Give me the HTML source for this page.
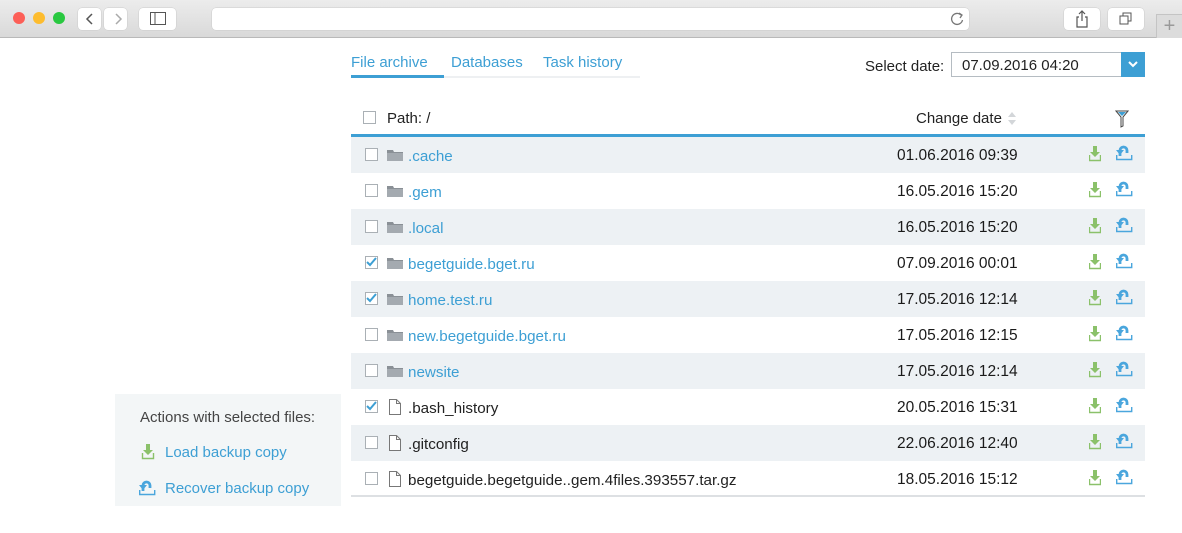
<!DOCTYPE html>
<html><head><meta charset="utf-8">
<style>
*{margin:0;padding:0;box-sizing:border-box}
body{width:1182px;height:533px;overflow:hidden;background:#fff;font-family:"Liberation Sans","DejaVu Sans",sans-serif;position:relative;color:#222}
.a{position:absolute}
.bar{left:0;top:0;width:1182px;height:38px;background:linear-gradient(#ececec,#d9d9d9);border-bottom:1px solid #b9b9b9}
.dot{width:12px;height:12px;border-radius:50%;top:12px}
.btn{background:#fff;border-radius:4px;height:22px;top:8px;box-shadow:0 0 0 .5px #ccc}
.tab{font-size:15px;color:#3d9fd4;top:54px}
.row{left:351px;width:794px;height:36px}
.sh{background:#edf1f4}
.cb{width:13px;height:13px;border:1px solid #aab0b5;background:#fff;left:14px;top:11px}
.nm{left:57px;top:11px;font-size:15.2px}
.lk{color:#3d9fd4}
.dt{left:546px;top:10px;font-size:15.5px;color:#1a1a1a}
.ic1{left:738px;top:9px}
.ic2{left:765px;top:7px}
.fold{left:36px;top:12px;width:16px;height:12px}
</style></head><body>
<div class="a bar"></div>
<div class="a dot" style="left:13px;background:#fc5f57"></div>
<div class="a dot" style="left:33px;background:#fdbc2e"></div>
<div class="a dot" style="left:53px;background:#29c840"></div>
<div class="a btn" style="left:78px;width:23px"></div>
<div class="a btn" style="left:104px;width:23px"></div>
<svg class="a" style="left:78px;top:8px" width="50" height="22"><path d="M14 6l-5 5 5 5" stroke="#555" stroke-width="1.5" fill="none"/><path d="M38 6l5 5-5 5" stroke="#aaa" stroke-width="1.5" fill="none"/></svg>
<div class="a btn" style="left:139px;width:37px"></div>
<svg class="a" style="left:150px;top:12px" width="16" height="13"><rect x=".5" y=".5" width="15" height="12" fill="none" stroke="#555"/><line x1="5" y1="0" x2="5" y2="13" stroke="#555"/></svg>
<div class="a btn" style="left:212px;width:757px"></div>
<svg class="a" style="left:949px;top:11px" width="16" height="16"><path d="M12 4A5.5 5.5 0 1 0 13.5 9" stroke="#777" stroke-width="1.3" fill="none"/><path d="M10 2l3 2-2 3" stroke="#777" stroke-width="1.3" fill="none"/></svg>
<div class="a btn" style="left:1064px;width:36px"></div>
<svg class="a" style="left:1075px;top:10px" width="14" height="18"><path d="M4 7H2v10h10V7h-2M7 1v10M4 4l3-3 3 3" stroke="#555" stroke-width="1.2" fill="none"/></svg>
<div class="a btn" style="left:1108px;width:36px"></div>
<svg class="a" style="left:1119px;top:12px" width="14" height="14"><rect x="1" y="4" width="8" height="8" fill="none" stroke="#555"/><path d="M4 4V1h8v8H9" stroke="#555" fill="none"/></svg>
<div class="a" style="left:1156px;top:14px;width:26px;height:24px;border-left:1px solid #c4c4c4;border-top:1px solid #c4c4c4;background:#dcdcdc;color:#999;font-size:20px;line-height:22px;text-align:center">+</div>

<div class="a tab" style="left:351px">File archive</div>
<div class="a tab" style="left:451px">Databases</div>
<div class="a tab" style="left:543px">Task history</div>
<div class="a" style="left:351px;top:76px;width:289px;height:2px;background:#eef0f2"></div>
<div class="a" style="left:351px;top:75px;width:93px;height:3px;background:#3d9fd4"></div>
<div class="a" style="left:865px;top:58px;font-size:15px">Select date:</div>
<div class="a" style="left:951px;top:52px;width:194px;height:25px;border:1px solid #b5bcc2;background:#fff;font-size:15px;padding:4px 0 0 10px">07.09.2016 04:20</div>
<div class="a" style="left:1121px;top:52px;width:24px;height:25px;background:#3d9fd4"></div>
<svg class="a" style="left:1127px;top:60px" width="12" height="10"><path d="M2 2l4 4 4-4" stroke="#fff" stroke-width="2" fill="none"/></svg>

<div class="a cb" style="left:363px;top:111px"></div>
<div class="a" style="left:387px;top:110px;font-size:15px">Path: /</div>
<div class="a" style="left:916px;top:110px;font-size:15px">Change date</div>
<svg class="a" style="left:1007px;top:111px" width="10" height="16"><path d="M1 6l4-5 4 5z M1 9l4 5 4-5z" fill="#d3d6d9"/></svg>
<svg class="a" style="left:1115px;top:110px" width="14" height="18"><path d="M1 1h12L8 7v9l-2 1V7z" fill="none" stroke="#444" stroke-width="1"/><path d="M3 2h8L7 6z" fill="#3d9fd4"/></svg>
<div class="a" style="left:351px;top:134px;width:794px;height:3px;background:#3d9fd4"></div>

<svg width="0" height="0" style="position:absolute"><defs>
<g id="dl"><path d="M4 0h4v6h3L6 11 1 6h3z" fill="#8bc16a"/><path d="M.5 9v5.5h11V9" fill="none" stroke="#8bc16a" stroke-width="1.4"/></g>
<g id="rc"><path d="M4 12V6.5a3.5 3.5 0 0 1 7 0V9" fill="none" stroke="#4aa6dd" stroke-width="2.8"/><path d="M0 6l4 5 4-5z" fill="#4aa6dd"/><path d="M.7 11v4.5h15V11" fill="none" stroke="#4aa6dd" stroke-width="1.4"/></g>
<g id="fd"><path d="M0 1h6l1 2h9v10H0z" fill="#8a9096"/><rect x="0" y="4" width="16" height="9" fill="#a4aab0"/></g>
<g id="fl"><path d="M.5.5h7l4 4v11H.5z" fill="#fff" stroke="#777"/><path d="M7.5.5v4h4" fill="none" stroke="#777"/></g>
<path id="ck" d="M2 6l3 3 6-7" stroke="#3d9fd4" stroke-width="2" fill="none"/>
</defs></svg>

<div class="a row sh" style="top:137px"><div class="a cb"></div><svg class="a fold" width="16" height="14"><use href="#fd"/></svg><div class="a nm lk">.cache</div><div class="a dt">01.06.2016 09:39</div><svg class="a ic1" width="12" height="16"><use href="#dl"/></svg><svg class="a ic2" width="17" height="17"><use href="#rc"/></svg></div>
<div class="a row" style="top:173px"><div class="a cb"></div><svg class="a fold" width="16" height="14"><use href="#fd"/></svg><div class="a nm lk">.gem</div><div class="a dt">16.05.2016 15:20</div><svg class="a ic1" width="12" height="16"><use href="#dl"/></svg><svg class="a ic2" width="17" height="17"><use href="#rc"/></svg></div>
<div class="a row sh" style="top:209px"><div class="a cb"></div><svg class="a fold" width="16" height="14"><use href="#fd"/></svg><div class="a nm lk">.local</div><div class="a dt">16.05.2016 15:20</div><svg class="a ic1" width="12" height="16"><use href="#dl"/></svg><svg class="a ic2" width="17" height="17"><use href="#rc"/></svg></div>
<div class="a row" style="top:245px"><div class="a cb"><svg width="13" height="13" style="position:absolute;left:-1px;top:-1px"><use href="#ck"/></svg></div><svg class="a fold" width="16" height="14"><use href="#fd"/></svg><div class="a nm lk">begetguide.bget.ru</div><div class="a dt">07.09.2016 00:01</div><svg class="a ic1" width="12" height="16"><use href="#dl"/></svg><svg class="a ic2" width="17" height="17"><use href="#rc"/></svg></div>
<div class="a row sh" style="top:281px"><div class="a cb"><svg width="13" height="13" style="position:absolute;left:-1px;top:-1px"><use href="#ck"/></svg></div><svg class="a fold" width="16" height="14"><use href="#fd"/></svg><div class="a nm lk">home.test.ru</div><div class="a dt">17.05.2016 12:14</div><svg class="a ic1" width="12" height="16"><use href="#dl"/></svg><svg class="a ic2" width="17" height="17"><use href="#rc"/></svg></div>
<div class="a row" style="top:317px"><div class="a cb"></div><svg class="a fold" width="16" height="14"><use href="#fd"/></svg><div class="a nm lk">new.begetguide.bget.ru</div><div class="a dt">17.05.2016 12:15</div><svg class="a ic1" width="12" height="16"><use href="#dl"/></svg><svg class="a ic2" width="17" height="17"><use href="#rc"/></svg></div>
<div class="a row sh" style="top:353px"><div class="a cb"></div><svg class="a fold" width="16" height="14"><use href="#fd"/></svg><div class="a nm lk">newsite</div><div class="a dt">17.05.2016 12:14</div><svg class="a ic1" width="12" height="16"><use href="#dl"/></svg><svg class="a ic2" width="17" height="17"><use href="#rc"/></svg></div>
<div class="a row" style="top:389px"><div class="a cb"><svg width="13" height="13" style="position:absolute;left:-1px;top:-1px"><use href="#ck"/></svg></div><svg class="a" style="left:38px;top:10px" width="12" height="16"><use href="#fl"/></svg><div class="a nm">.bash_history</div><div class="a dt">20.05.2016 15:31</div><svg class="a ic1" width="12" height="16"><use href="#dl"/></svg><svg class="a ic2" width="17" height="17"><use href="#rc"/></svg></div>
<div class="a row sh" style="top:425px"><div class="a cb"></div><svg class="a" style="left:38px;top:10px" width="12" height="16"><use href="#fl"/></svg><div class="a nm">.gitconfig</div><div class="a dt">22.06.2016 12:40</div><svg class="a ic1" width="12" height="16"><use href="#dl"/></svg><svg class="a ic2" width="17" height="17"><use href="#rc"/></svg></div>
<div class="a row" style="top:461px"><div class="a cb"></div><svg class="a" style="left:38px;top:10px" width="12" height="16"><use href="#fl"/></svg><div class="a nm">begetguide.begetguide..gem.4files.393557.tar.gz</div><div class="a dt">18.05.2016 15:12</div><svg class="a ic1" width="12" height="16"><use href="#dl"/></svg><svg class="a ic2" width="17" height="17"><use href="#rc"/></svg></div>
<div class="a" style="left:351px;top:495px;width:794px;height:2px;background:#dde0e3"></div>

<div class="a" style="left:115px;top:394px;width:226px;height:112px;background:#f3f6f7"></div>
<div class="a" style="left:140px;top:409px;font-size:15px;color:#444">Actions with selected files:</div>
<svg class="a" style="left:140px;top:444px" width="16" height="16"><g transform="translate(2,0)"><use href="#dl"/></g></svg>
<div class="a" style="left:165px;top:444px;font-size:15px;color:#3d9fd4">Load backup copy</div>
<svg class="a" style="left:139px;top:479px" width="17" height="17"><use href="#rc"/></svg>
<div class="a" style="left:165px;top:480px;font-size:15px;color:#3d9fd4">Recover backup copy</div>
</body></html>
